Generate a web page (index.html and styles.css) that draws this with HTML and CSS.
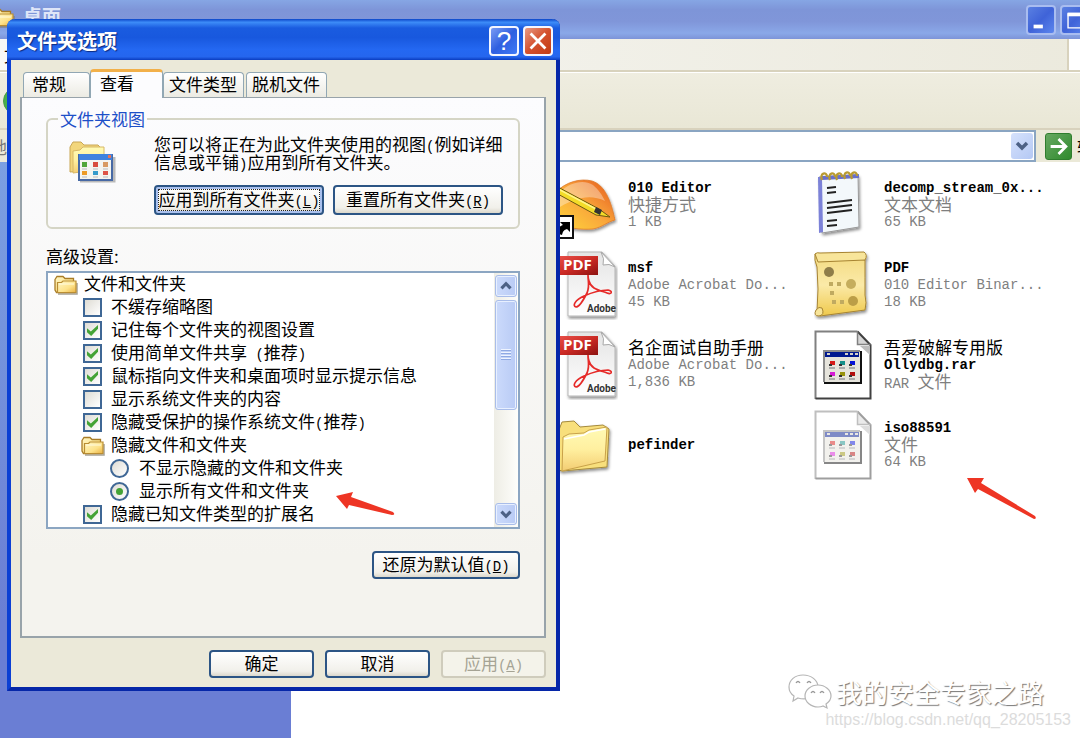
FILE: index.html
```html
<!DOCTYPE html>
<html lang="zh-CN">
<head>
    <meta charset="UTF-8">
    <meta name="viewport" content="width=device-width, initial-scale=1.0">
    <title>文件夹选项</title>
    <link rel="stylesheet" href="styles.css">
</head>
<body>

    <!-- shared icons -->
    <svg class="defs" width="0" height="0" aria-hidden="true">
        <defs>
            <linearGradient id="gFolder" x1="0" y1="0" x2="0" y2="1">
                <stop offset="0" stop-color="#fffbb5"/><stop offset=".5" stop-color="#fff0a0"/><stop offset="1" stop-color="#f3cd72"/>
            </linearGradient>
            <linearGradient id="gSmall" x1="0" y1="0" x2="1" y2="1">
                <stop offset="0" stop-color="#fff7c6"/><stop offset=".6" stop-color="#fde28a"/><stop offset="1" stop-color="#e9b040"/>
            </linearGradient>
            <linearGradient id="gPaper" x1="0" y1="0" x2="0" y2="1">
                <stop offset="0" stop-color="#e4e4e4"/><stop offset="1" stop-color="#ffffff"/>
            </linearGradient>
            <linearGradient id="gRed" x1="0" y1="0" x2="1" y2="1">
                <stop offset="0" stop-color="#e8504a"/><stop offset=".5" stop-color="#cc2b25"/><stop offset="1" stop-color="#8c1210"/>
            </linearGradient>
            <linearGradient id="gOrange" x1="0" y1="1" x2="1" y2="0">
                <stop offset="0" stop-color="#ffd83a"/><stop offset=".5" stop-color="#f9a63a"/><stop offset="1" stop-color="#e4531c"/>
            </linearGradient>
            <linearGradient id="gScroll" x1="0" y1="0" x2="0" y2="1">
                <stop offset="0" stop-color="#f3da80"/><stop offset=".5" stop-color="#fbeaa8"/><stop offset="1" stop-color="#efc94c"/>
            </linearGradient>
            <filter id="soft" x="-20%" y="-20%" width="140%" height="150%">
                <feDropShadow dx="1" dy="2" stdDeviation="1.5" flood-opacity=".45"/>
            </filter>
        </defs>
        <symbol id="icon-folder-small" viewBox="0 0 24 20">
            <path d="M4 19h19V8" fill="none" stroke="#7f7a6a" stroke-width="1.5" opacity=".7"/>
            <path d="M1 4.500 3 1.500h6l2 2h8.500v3.500l1.500 1v9.500H2.500L1 15z" fill="url(#gSmall)" stroke="#a97c26" stroke-width="1.300"/>
            <path d="M3.500 17.500V7.500h4l1.500-1.500h13v11.500z" fill="url(#gSmall)" stroke="#b98d33" stroke-width="1.200"/>
            <path d="M5 9h15" stroke="#fffbe0"/>
        </symbol>
        <symbol id="icon-pdf" viewBox="0 0 60 70">
            <g filter="url(#soft)">
                <path d="M10 2h34l13 14v50H10z" fill="url(#gPaper)" stroke="#b5b5b5"/>
            </g>
            <path d="M43 2q4 7 2 13 6-2 12 2z" fill="#fff" stroke="#aaa"/>
            <path d="M30 25c0 7 2 11-1 18-4 8-8 14-11 14-4-1-1-7 8-11 9-4 17-6 24-6 5 1 4 5-1 3-8-3-16-4-18-12-1-3-1-5-1-6z" fill="none" stroke="#e62a28" stroke-width="1.700"/>
            <path d="M0 6h40v19H0z" fill="url(#gRed)"/>
            <text x="5" y="20" class="pdf-tag">PDF</text>
            <text x="29" y="62" class="pdf-brand">Adobe</text>
        </symbol>
        <symbol id="icon-binary" viewBox="0 0 60 70">
            <path d="M1.500 1.500h42L56.500 15v53.500h-55z" fill="#fff"/>
            <path d="M1.500 69V1.500h42" fill="none" stroke="#808080" stroke-width="2"/>
            <path d="M43.500 1.500v13h13z" fill="#d6d6d6"/>
            <path d="M43.500 1.500 56.500 15v53.500h-55" fill="none" stroke="#404040" stroke-width="2"/>
            <path d="M43.500 1.500v13h13" fill="none" stroke="#808080" stroke-width="1.500"/>
            <path d="M46 16h10v9z" fill="#bcbcbc"/>
            <path d="M10 21h36v31H10z" fill="#e6e4dc"/>
            <path d="M10 52V21h36" fill="none" stroke="#8c8c8c" stroke-width="2"/>
            <path d="M10 53h37V21" fill="none" stroke="#111" stroke-width="2"/>
            <path d="M11 22h34v5H11z" fill="#00188f"/>
            <path d="M13 24h3M31 24h3m2 0h3m2 0h3" stroke="#d4d0c8" stroke-width="2"/>
            <path d="M15 38h6m4 0h6m4 0h6M15 49h6m4 0h6m4 0h6" stroke="#aaa" stroke-width="2"/>
            <path d="M16 31h5v4h-5z" fill="#d71918"/><path d="M26 31h5v4h-5z" fill="#15908a"/><path d="M36 31h5v4h-5z" fill="#0712d8"/>
            <path d="M16 42h5v4h-5z" fill="#d61bd6"/><path d="M26 42h5v4h-5z" fill="#98930c"/><path d="M36 42h5v4h-5z" fill="#b20f0e"/>
            <path d="M15 35h3m7 0h3m7 0h3M15 46h3m7 0h3m7 0h3" stroke="#333" stroke-width="2"/>
        </symbol>
    </svg>

    <div class="explorer">
        <header class="explorer-title">
            <svg class="title-folder" viewBox="0 0 24 20"><use href="#icon-folder-small"/></svg>
            <h1>桌面</h1>
            <button class="win-btn" aria-label="最小化"><svg viewBox="0 0 28 28"><path d="M6 19h10v4H6z" fill="#fff"/></svg></button>
            <button class="win-btn" aria-label="最大化"><svg viewBox="0 0 28 28"><path d="M6.500 7.500h15v15h-15z" fill="none" stroke="#fff" stroke-width="1.500"/><path d="M6 6h16v4H6z" fill="#fff"/></svg></button>
            <button class="win-btn close" aria-label="关闭"></button>
        </header>
        <nav class="menubar"><span>文</span><div class="throbber"></div></nav>
        <div class="toolbar"><button class="back" aria-label="后退"></button></div>
        <div class="address">
            <label for="path">地</label>
            <div class="combo">
                <input id="path" type="text">
                <button class="drop" aria-label="展开"><svg viewBox="0 0 22 26"><path d="M6 10l5 5 5-5" fill="none" stroke="#4d6185" stroke-width="3.500"/></svg></button>
            </div>
            <button class="go"><svg viewBox="0 0 27 27"><path d="M5 13.500h16M13.500 5.500l8 8-8 8" fill="none" stroke="#fff" stroke-width="3"/></svg><span>转到</span></button>
        </div>
        <div class="content">
            <aside class="sidebar"></aside>
            <main class="files">
                <a class="file" href="#">
                    <svg viewBox="0 0 60 70">
                        <g filter="url(#soft)"><path d="M-2 22C8 12 22 8 34 11c13 4 19 20 23 39-8 2-12 7-22 9-13 1-25-1-37-5z" fill="url(#gOrange)" stroke="#dd7a29" stroke-width=".8"/></g>
                        <path d="M2 22C12 12 26 9 35 15c6 5 9 10 12 16C33 24 18 27 2 37z" fill="#fff" opacity=".35"/>
                        <path d="M-2 16 41 39l11 8-14-2L-2 23z" fill="#f4dc28" stroke="#6b5711"/>
                        <path d="M0 19l38 20" stroke="#fff58a" stroke-width="1.500"/>
                        <path d="M38 37l6 3-2 5-6-3z" fill="#333"/>
                        <path d="M-3 46h18v22H-3z" fill="#fff" stroke="#111" stroke-width="2"/>
                        <path d="M1 64c-2-6 1-8 4-9l-3-3h10v10l-3-3c-3 1-4 2-5 6z" fill="#000"/>
                    </svg>
                    <span class="info"><b class="name en">010 Editor</b><span class="zh">快捷方式</span><span class="en">1 KB</span></span>
                </a>
                <a class="file" href="#">
                    <svg viewBox="0 0 60 70">
                        <g filter="url(#soft)"><path d="M5 7l39-2 1 52-37 6z" fill="#f3f8fb" stroke="#999"/></g>
                        <path d="M4 7l4 0 1 55-4 1z" fill="#7c82d8"/>
                        <path d="M8 8l37-2" stroke="#6970c9" stroke-width="4"/>
                        <path d="M8 10c-3-7 5-9 5-3M16 10c-3-7 5-9 5-3M23 10c-3-7 5-9 5-3M31 9c-3-7 5-9 5-3M38 9c-3-7 5-9 5-3" fill="none" stroke="#b99b31" stroke-width="2.200"/>
                        <path d="M13 18l9-1M13 23l9-1M13 33l25-3M13 38l25-3M13 43l25-3M13 51l10-1M13 56l10-1" stroke="#222" stroke-width="2"/>
                    </svg>
                    <span class="info"><b class="name en">decomp_stream_0x...</b><span class="zh">文本文档</span><span class="en">65 KB</span></span>
                </a>
                <a class="file" href="#">
                    <svg viewBox="0 0 60 70"><use href="#icon-pdf"/></svg>
                    <span class="info"><b class="name en">msf</b><span class="en">Adobe Acrobat Do...</span><span class="en">45 KB</span></span>
                </a>
                <a class="file" href="#">
                    <svg viewBox="0 0 60 70">
                        <g filter="url(#soft)">
                            <path d="M1 4q-1 6 2 13 2 22 0 44l3 5 45-6q2-7 0-15 0-18 0-35z" fill="url(#gScroll)" stroke="#a78431"/>
                            <path d="M1 4q2-2 5-1l44-1q4 3 1 8l-47 2z" fill="#f8e59a" stroke="#a78431"/>
                            <path d="M2 60q-3 6 3 6 6-1 3-8-3-2-6 2z" fill="#f8e59a" stroke="#a78431"/>
                        </g>
                        <circle cx="15" cy="22" r="5" fill="#8f7d49"/>
                        <circle cx="37" cy="34" r="5" fill="#c5ad5d"/>
                        <circle cx="39" cy="51" r="5" fill="#bb9e47"/>
                        <path d="M15 32h4v4h-4zM23 32h4v4h-4zM16 41h4v4h-4zM18 50h4v4h-4zM26 50h4v4h-4z" fill="#c0aa60"/>
                    </svg>
                    <span class="info"><b class="name en">PDF</b><span class="en">010 Editor Binar...</span><span class="en">18 KB</span></span>
                </a>
                <a class="file" href="#">
                    <svg viewBox="0 0 60 70"><use href="#icon-pdf"/></svg>
                    <span class="info"><span class="name zh">名企面试自助手册</span><span class="en">Adobe Acrobat Do...</span><span class="en">1,836 KB</span></span>
                </a>
                <a class="file" href="#">
                    <svg viewBox="0 0 60 70"><use href="#icon-binary"/></svg>
                    <span class="info"><span class="name zh">吾爱破解专用版</span><b class="name en">Ollydbg.rar</b><span class="zh"><span class="en">RAR </span>文件</span></span>
                </a>
                <a class="file" href="#">
                    <svg viewBox="0 0 60 70">
                        <g filter="url(#soft)">
                            <path d="M1 60V20l3-8 12-1 6 6 23-2 6 4-2 38L4 61z" fill="#f8df7c" stroke="#a58a3c"/>
                            <path d="M4 61 5 27l6-3 15-1 5-3 18-3-2 34z" fill="url(#gFolder)" stroke="#c9a24a"/>
                        </g>
                        <path d="M6 29l20-4 5-3 16-3" fill="none" stroke="#fff" stroke-width="1.500"/>
                    </svg>
                    <span class="info"><b class="name en">pefinder</b></span>
                </a>
                <a class="file" href="#">
                    <svg class="dim" viewBox="0 0 60 70"><use href="#icon-binary"/></svg>
                    <span class="info"><b class="name en">iso88591</b><span class="zh">文件</span><span class="en">64 KB</span></span>
                </a>
            </main>
        </div>
    </div>

    <section class="dialog" role="dialog" aria-labelledby="dialogTitle">
        <header class="dialog-title">
            <h2 id="dialogTitle">文件夹选项</h2>
            <button class="cap-btn help" aria-label="帮助">?</button>
            <button class="cap-btn close" aria-label="关闭"><svg viewBox="0 0 28 28"><path d="M6 6l16 16M22 6L6 22" stroke="#fff" stroke-width="3"/></svg></button>
        </header>
        <div class="dialog-body">
            <div class="tabs" role="tablist">
                <button class="tab" role="tab">常规</button>
                <button class="tab active" role="tab" aria-selected="true">查看</button>
                <button class="tab" role="tab">文件类型</button>
                <button class="tab" role="tab">脱机文件</button>
            </div>
            <div class="panel">
                <fieldset class="views">
                    <legend>文件夹视图</legend>
                    <svg class="views-icon" viewBox="0 0 48 44">
                        <path d="M2 33V8l3-5h8l3 3h14l4 4v20z" fill="#f2d67c" stroke="#c9a655"/>
                        <path d="M5 34V12l7-1 3-3h21v22z" fill="url(#gFolder)" stroke="#d8b866"/>
                        <path d="M12 42h34V18" fill="none" stroke="#777" stroke-width="3" opacity=".5"/>
                        <path d="M11 16h33v25H11z" fill="#f4f5f0" stroke="#4769a5" stroke-width="2"/>
                        <path d="M11 15h33v6H11z" fill="#3f82df"/><path d="M40 16h3v3h-3z" fill="#e67359"/>
                        <path d="M14 23h5v5h-5z" fill="#51a638"/><path d="M25 23h5v5h-5z" fill="#d84d3e"/><path d="M35 23h5v5h-5z" fill="#d89a62"/>
                        <path d="M14 32h5v4h-5z" fill="#ec9b26"/><path d="M25 32h5v4h-5z" fill="#359bcb"/><path d="M35 32h5v4h-5z" fill="#dd5447"/>
                        <path d="M14 30h5m6 0h5m5 0h5M14 38h5m6 0h5m5 0h5" stroke="#bbb"/>
                    </svg>
                    <div class="views-main">
                        <p>您可以将正在为此文件夹使用的视图<span class="en">(</span>例如详细<br>信息或平铺<span class="en">)</span>应用到所有文件夹。</p>
                        <div class="views-buttons">
                            <button class="btn focused">应用到所有文件夹<span class="en">(<u>L</u>)</span></button>
                            <button class="btn">重置所有文件夹<span class="en">(<u>R</u>)</span></button>
                        </div>
                    </div>
                </fieldset>

                <p class="advanced-label">高级设置:</p>
                <div class="tree">
                    <ul>
                        <li><svg viewBox="0 0 24 20"><use href="#icon-folder-small"/></svg><span class="zh">文件和文件夹</span></li>
                        <li class="level1"><input type="checkbox" id="thumbs"><label class="zh" for="thumbs">不缓存缩略图</label></li>
                        <li class="level1"><input type="checkbox" id="remember" checked><label class="zh" for="remember">记住每个文件夹的视图设置</label></li>
                        <li class="level1"><input type="checkbox" id="sharing" checked><label class="zh" for="sharing">使用简单文件共享<span class="en"> (</span>推荐<span class="en">)</span></label></li>
                        <li class="level1"><input type="checkbox" id="tips" checked><label class="zh" for="tips">鼠标指向文件夹和桌面项时显示提示信息</label></li>
                        <li class="level1"><input type="checkbox" id="system"><label class="zh" for="system">显示系统文件夹的内容</label></li>
                        <li class="level1"><input type="checkbox" id="protected" checked><label class="zh" for="protected">隐藏受保护的操作系统文件<span class="en">(</span>推荐<span class="en">)</span></label></li>
                        <li class="level1"><svg viewBox="0 0 24 20"><use href="#icon-folder-small"/></svg><span class="zh">隐藏文件和文件夹</span></li>
                        <li class="level2"><input type="radio" name="hidden" id="hide"><label class="zh" for="hide">不显示隐藏的文件和文件夹</label></li>
                        <li class="level2"><input type="radio" name="hidden" id="show" checked><label class="zh" for="show">显示所有文件和文件夹</label></li>
                        <li class="level1"><input type="checkbox" id="ext" checked><label class="zh" for="ext">隐藏已知文件类型的扩展名</label></li>
                    </ul>
                    <div class="scrollbar">
                        <button aria-label="向上"><svg viewBox="0 0 20 22"><path d="M5 13.500l5-5 5 5" fill="none" stroke="#4d6185" stroke-width="3.500"/></svg></button>
                        <div class="thumb"></div>
                        <button class="down" aria-label="向下"><svg viewBox="0 0 20 22"><path d="M5 8.500l5 5 5-5" fill="none" stroke="#4d6185" stroke-width="3.500"/></svg></button>
                    </div>
                </div>
                <button class="btn restore">还原为默认值<span class="en">(<u>D</u>)</span></button>
            </div>
            <footer class="dialog-buttons">
                <button class="btn">确定</button>
                <button class="btn">取消</button>
                <button class="btn" disabled>应用<span class="en">(<u>A</u>)</span></button>
            </footer>
        </div>
    </section>

    <!-- red pointers -->
    <svg class="pointer pointer-option" viewBox="0 0 60 26"><path d="M0 5 17 1l-2 5 42 15q3 3-1 3L13 14l-2 4z" fill="#ee3524"/></svg>
    <svg class="pointer pointer-file" viewBox="0 0 70 44"><path d="M0 1 17 1l-3 5 54 33q2 3-1 3L11 12l-3 4z" fill="#ee3524"/></svg>

    <div class="watermark">
        <div class="account">
            <svg viewBox="0 0 44 36">
                <g fill="#fff" stroke="#b5b5b5" stroke-width="1.200">
                    <path d="M15 1C7 1 1 6 1 13c0 4 2 7 5 9l-1 5 5-3c10 3 20-2 20-11C30 6 23 1 15 1z"/>
                    <path d="M30 11c-7 0-13 5-13 11s6 11 13 11c2 0 3 0 5-1l4 2-1-4c3-2 5-5 5-8 0-6-6-11-13-11z"/>
                </g>
                <path d="M8 9q2-3 4 0M19 9q2-3 4 0M23 19q2-3 4 0M32 19q2-3 4 0" fill="none" stroke="#999" stroke-width="1.300"/>
            </svg>
            <span>我的安全专家之路</span>
        </div>
        <div class="url">https://blog.csdn.net/qq_28205153</div>
    </div>

</body>
</html>
```

FILE: styles.css
```css
* {
    box-sizing: border-box;
}

body {
    margin: 0;
    min-height: 100vh;
    overflow: hidden;
    position: relative;
    font-family: "Noto Sans CJK SC", sans-serif;
    font-size: 17px;
    line-height: 17px;
    color: #000;
    background-color: #fff;
}

button, input {
    font: inherit;
    color: inherit;
    margin: 0;
    padding: 0;
}

h1, h2, p, ul {
    margin: 0;
    padding: 0;
}

svg {
    display: block;
    flex: none;
}

.defs {
    position: absolute;
}

/* latin text keeps half the width of a chinese character */
.en {
    font-family: "Liberation Mono", monospace;
    font-size: 14px;
    line-height: 0;
    white-space: pre;
}

.zh {
    line-height: 13px;
    padding-bottom: 4px;
}

/* explorer window, its right edge runs off the screen */
.explorer {
    display: flex;
    flex-direction: column;
    height: 100vh;
    margin-right: -48px;
}

.explorer-title {
    display: flex;
    align-items: center;
    gap: 4px;
    height: 39px;
    flex: none;
    padding-right: 4px;
    background: linear-gradient(#86a6e4, #7e95d8 25%, #8096d9 55%, #8aa8e8 85%, #7d94d8);
}

.title-folder {
    width: 24px;
    height: 20px;
    margin-left: -9px;
    margin-bottom: 4px;
}

.explorer-title h1 {
    flex: 1;
    margin-bottom: 8px;
    padding-left: 4px;
    font-size: 19px;
    line-height: 24px;
    color: #dfe6f8;
}

.win-btn {
    width: 30px;
    height: 30px;
    border: 2px solid #a9bdf0;
    border-radius: 4px;
    background: linear-gradient(135deg, #5a80e2, #3f63d8 50%, #5c86ee);
}

.win-btn.close {
    background: #c66;
}

.menubar {
    display: flex;
    align-items: center;
    justify-content: space-between;
    height: 33px;
    flex: none;
    padding-left: 4px;
    border-bottom: 2px solid #d8d2bd;
    background: linear-gradient(90deg, #f8f8f6, #ebe9dc);
}

.throbber {
    width: 61px;
    height: 100%;
    border-left: 2px solid #d8d2bd;
    background-color: #fff;
}

.toolbar {
    display: flex;
    align-items: center;
    height: 58px;
    flex: none;
    padding-left: 3px;
    border-top: 1px solid #fff;
    border-bottom: 2px solid #d8d2bd;
    background: linear-gradient(#efede0, #e9e7d6);
}

.back {
    width: 28px;
    height: 28px;
    border: 1px solid #4d9a48;
    border-radius: 50%;
    background: #48b04a;
}

.address {
    display: flex;
    align-items: center;
    height: 32px;
    flex: none;
    gap: 9px;
    padding-right: 17px;
    background-color: #ebe9d8;
}

.address label {
    margin-left: -10px;
    color: #777;
}

.combo {
    flex: 1;
    display: flex;
    align-items: center;
    height: 32px;
    padding-right: 1px;
    border: 2px solid #8aa5c2;
    background-color: #fff;
}

.combo input {
    flex: 1;
    min-width: 0;
    border: none;
    outline: none;
}

.drop {
    width: 22px;
    height: 26px;
    border: none;
    border-radius: 3px;
    background: linear-gradient(135deg, #d6e2fc, #b4c8f4);
}

.go {
    display: flex;
    align-items: center;
    gap: 5px;
    border: none;
    background: none;
}

.go svg {
    width: 27px;
    height: 27px;
    border: 1px solid #2f7d2e;
    border-radius: 3px;
    background: linear-gradient(135deg, #67a862, #2f8a2d);
}

.content {
    flex: 1;
    display: flex;
}

.sidebar {
    width: 291px;
    flex: none;
    background: linear-gradient(#7ba0e2, #6a7ed4 80%);
}

/* the first column of files is covered by the dialog */
.files {
    flex: 1;
    display: grid;
    grid-template-columns: 256px 256px;
    grid-auto-rows: 80px;
    padding: 3px 0 0 267px;
    background-color: #fff;
}

.file {
    display: flex;
    align-items: center;
    gap: 10px;
    text-decoration: none;
    color: #7f7f7f;
}

.file > svg {
    width: 60px;
    height: 70px;
}

.file .dim {
    opacity: .5;
}

.info {
    display: flex;
    flex-direction: column;
    white-space: nowrap;
}

.info > .en {
    line-height: 17px;
}

.name {
    color: #000;
}

.pdf-tag {
    font: bold 15px "Open Sans", sans-serif;
    fill: #fff;
}

.pdf-brand {
    font: bold 10px Roboto, sans-serif;
    fill: #333;
}

/* folder options dialog */
.dialog {
    position: absolute;
    left: 7px;
    top: 19px;
    width: 553px;
    border: 4px solid #0b3fd4;
    border-top: none;
    border-right-color: #0627a8;
    border-bottom-color: #0627a8;
    border-radius: 8px 8px 0 0;
    background-color: #ebe9d9;
}

.dialog-title {
    display: flex;
    align-items: center;
    gap: 4px;
    height: 41px;
    margin: 0 -4px;
    padding: 2px 7px 0 10px;
    border-radius: 8px 8px 0 0;
    background: linear-gradient(#0b45c8, #3d8cf8 8%, #1a5ce0 22%, #1858de 45%, #2468f2 75%, #2566ee 92%, #0a3cc0);
}

.dialog-title h2 {
    flex: 1;
    font-size: 20px;
    line-height: 24px;
    color: #fff;
    text-shadow: 1px 1px 1px #0b2a80;
}

.cap-btn {
    width: 30px;
    height: 30px;
    border: 2px solid #f4f6ff;
    border-radius: 4px;
    color: #fff;
    font-family: "Liberation Sans", sans-serif;
    font-size: 26px;
    line-height: 26px;
}

.help {
    background: linear-gradient(135deg, #7a9cf4, #2f5fe0 50%, #3f7af6);
}

.cap-btn.close {
    background: linear-gradient(135deg, #e89a84, #d4512e 50%, #c23c14);
}

.cap-btn svg {
    width: 26px;
    height: 26px;
}

.dialog-body {
    padding: 9px 10px 9px 9px;
}

.tabs {
    display: flex;
    align-items: flex-end;
    height: 28px;
    padding-left: 3px;
}

.tab {
    height: 25px;
    padding: 0 6px 3px 5px;
    border: 1px solid #91a7b4;
    border-bottom: none;
    border-radius: 4px 4px 0 0;
    background: linear-gradient(#fff, #ecebe3);
}

.tab:first-child {
    padding: 0 23px 3px 8px;
}

.tab:last-child {
    margin-left: 2px;
}

.tab.active {
    position: relative;
    height: 29px;
    margin-bottom: -1px;
    padding: 0 28px 6px 9px;
    border-top: 3px solid #f2b04a;
    background: #fcfcfe;
}

.panel {
    display: flex;
    flex-direction: column;
    height: 541px;
    padding: 12px 24px;
    border: 2px solid #98a3aa;
    border-top-width: 1px;
    background: linear-gradient(#fcfcfe, #f4f3ee 85%);
}

.views {
    display: flex;
    gap: 38px;
    min-width: 0;
    height: 119px;
    margin: 0;
    padding: 8px 14px 0 20px;
    border: 2px solid #d5d5c5;
    border-radius: 6px;
}

.views legend {
    margin-left: -10px;
    padding: 0 2px;
    color: #1c4fc8;
}

.views-icon {
    width: 48px;
    height: 44px;
    margin-top: 4px;
}

.views-main p {
    line-height: 18px;
    white-space: nowrap;
}

.views-buttons {
    display: flex;
    gap: 9px;
    margin-top: 14px;
}

.btn {
    height: 30px;
    padding: 0 2px 4px;
    border: 2px solid #2c5585;
    border-radius: 4px;
    background: linear-gradient(#fff, #f1f0ea 80%, #dcd8cc);
    white-space: nowrap;
}

.views-buttons .btn {
    width: 170px;
}

.btn.focused {
    box-shadow: inset 0 0 0 2px #a9c0ee;
    outline: 1px dotted #222;
    outline-offset: -5px;
}

.advanced-label {
    margin: 18px 0 7px;
}

.tree {
    display: flex;
    height: 258px;
    border: 2px solid #8ca6c2;
    background-color: #fff;
}

.tree ul {
    flex: 1;
    list-style: none;
    overflow: hidden;
}

.tree li {
    display: flex;
    align-items: center;
    gap: 6px;
    height: 23px;
    padding-left: 6px;
    white-space: nowrap;
}

.tree .level1 {
    padding-left: 33px;
}

.tree .level2 {
    padding-left: 61px;
}

.tree li svg {
    width: 24px;
    height: 20px;
}

.tree input {
    appearance: none;
    display: grid;
    place-items: center;
    width: 19px;
    height: 19px;
    margin: 0 3px 0 2px;
    border: 2px solid #3f6795;
    background: linear-gradient(135deg, #dedcd4, #fff);
}

.tree input[type="radio"] {
    margin: 0 4px 0 1px;
    border-radius: 50%;
}

.tree input[type="checkbox"]:checked::before {
    content: "";
    width: 11px;
    height: 11px;
    background-color: #44a336;
    clip-path: polygon(0 30%, 35% 58%, 100% 0, 100% 35%, 38% 100%, 0 65%);
}

.tree input[type="radio"]:checked::before {
    content: "";
    width: 7px;
    height: 7px;
    border-radius: 50%;
    background-color: #44a336;
}

.scrollbar {
    display: flex;
    flex-direction: column;
    width: 24px;
    gap: 3px;
    padding: 2px 1px;
    background: linear-gradient(90deg, #eeede5, #fefefb);
}

.scrollbar button,
.thumb {
    border: 1px solid #a9bde9;
    border-radius: 3px;
    background: linear-gradient(90deg, #cbdafb, #b9cbf5);
    box-shadow: inset 0 0 0 1px #e8f0ff;
}

.scrollbar button {
    height: 22px;
}

.scrollbar svg {
    width: 20px;
    height: 20px;
}

.scrollbar .down {
    margin-top: auto;
}

.thumb {
    display: grid;
    place-items: center;
    height: 110px;
}

.thumb::before {
    content: "";
    width: 10px;
    height: 12px;
    background: repeating-linear-gradient(#eef4ff 0 1px, #8fa9e3 1px 2px, transparent 2px 3px);
}

.restore {
    align-self: flex-end;
    width: 148px;
    height: 28px;
    margin-top: 22px;
}

.dialog-buttons {
    display: flex;
    justify-content: flex-end;
    gap: 11px;
    padding-top: 12px;
}

.dialog-buttons .btn {
    width: 105px;
    height: 28px;
}

.btn:disabled {
    border-color: #cfccbc;
    background: #f4f3ea;
    color: #a5a394;
}

.pointer {
    position: absolute;
}

.pointer-option {
    left: 336px;
    top: 491px;
    width: 60px;
    height: 26px;
}

.pointer-file {
    left: 967px;
    top: 477px;
    width: 70px;
    height: 44px;
}

.watermark {
    position: absolute;
    right: 9px;
    bottom: 8px;
    text-align: right;
}

.account {
    display: flex;
    align-items: center;
    justify-content: flex-end;
    gap: 4px;
    margin-right: 27px;
    font-size: 26px;
    line-height: 36px;
    color: #fff;
    text-shadow: 1px 1px 1px #777;
}

.account svg {
    width: 44px;
    height: 36px;
}

.url {
    font-family: "Liberation Sans", sans-serif;
    font-size: 16px;
    line-height: 20px;
    color: #dcdcdc;
}
```
